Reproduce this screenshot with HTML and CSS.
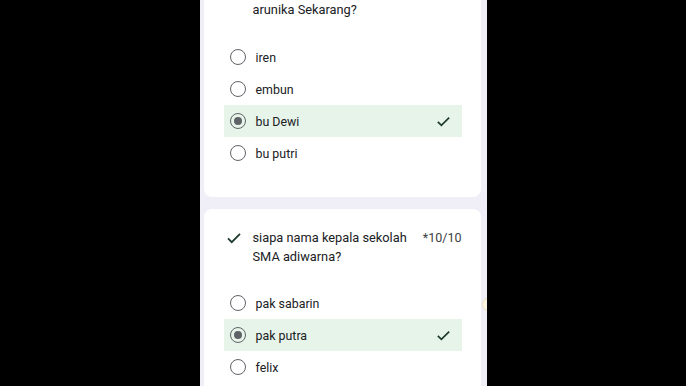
FILE: index.html
```html
<!DOCTYPE html>
<html lang="en">
<head>
    <meta charset="UTF-8">
    <meta name="viewport" content="width=device-width, initial-scale=1.0">
    <title>Kuis</title>
    <link rel="stylesheet" href="styles.css">
</head>
<body>
    <div class="page">
        <div class="card card-first">
            <div class="question">
                <span class="question-mark"></span>
                <p class="question-text">arunika Sekarang?</p>
            </div>
            <div class="options">
                <div class="option">
                    <span class="radio"></span>
                    <span class="label">iren</span>
                </div>
                <div class="option">
                    <span class="radio"></span>
                    <span class="label">embun</span>
                </div>
                <div class="option correct">
                    <span class="radio checked"></span>
                    <span class="label">bu Dewi</span>
                    <svg class="tick" viewBox="0 0 24 24"><path d="M4 12.5l5 5L20 6.5"/></svg>
                </div>
                <div class="option">
                    <span class="radio"></span>
                    <span class="label">bu putri</span>
                </div>
            </div>
        </div>

        <div class="card">
            <div class="question">
                <span class="question-mark">
                    <svg class="tick" viewBox="0 0 24 24"><path d="M4 12.5l5 5L20 6.5"/></svg>
                </span>
                <p class="question-text">siapa nama kepala sekolah SMA adiwarna?</p>
                <span class="points">*10/10</span>
            </div>
            <div class="options">
                <div class="option">
                    <span class="radio"></span>
                    <span class="label">pak sabarin</span>
                </div>
                <div class="option correct">
                    <span class="radio checked"></span>
                    <span class="label">pak putra</span>
                    <svg class="tick" viewBox="0 0 24 24"><path d="M4 12.5l5 5L20 6.5"/></svg>
                </div>
                <div class="option">
                    <span class="radio"></span>
                    <span class="label">felix</span>
                </div>
            </div>
        </div>

        <span class="edge-bubble"></span>
    </div>
</body>
</html>
```

FILE: styles.css
```css
* {
    margin: 0;
    padding: 0;
    box-sizing: border-box;
    font-family: Roboto, 'Noto Sans', Arial, sans-serif;
}

html, body {
    height: 100%;
    overflow: hidden;
}

body {
    background-color: #000;
    color: #202124;
}

.page {
    position: relative;
    overflow: hidden;
    width: 287px;
    height: 100%;
    margin: 0 auto;
    padding: 0 6px 0 4px;
    background-color: #f0eef6;
    display: flex;
    flex-direction: column;
    gap: 12px;
}

.card {
    background: #fff;
    border-radius: 8px;
    padding: 19px 19px 28px 20px;
}

.card-first {
    border-top-left-radius: 0;
    border-top-right-radius: 0;
    padding-top: 0;
}

.question {
    display: flex;
    align-items: flex-start;
    font-size: 12.8px;
    line-height: 19px;
}

.question-mark {
    width: 29px;
    flex-shrink: 0;
    display: flex;
    padding-left: 1px;
    height: 19px;
    align-items: center;
}

.question-mark .tick {
    width: 18px;
    height: 18px;
}

.question-text {
    flex: 1;
    padding-right: 8px;
}

.points {
    font-size: 12.5px;
    color: #3c4043;
}

.options {
    margin-top: 22px;
    display: flex;
    flex-direction: column;
}

.card + .card .options {
    margin-top: 21px;
}

.option {
    display: flex;
    align-items: center;
    height: 32px;
    padding: 0 10px 0 6px;
    font-size: 12.4px;
}

.option.correct {
    background-color: #e6f4ea;
}

.radio {
    width: 16px;
    height: 16px;
    border: 1.6px solid #5f6368;
    border-radius: 50%;
    flex-shrink: 0;
    display: flex;
    align-items: center;
    justify-content: center;
}

.radio.checked::after {
    content: "";
    width: 8px;
    height: 8px;
    border-radius: 50%;
    background-color: #5f6368;
}

.label {
    flex: 1;
    margin-left: 10px;
}

.tick {
    width: 17px;
    height: 17px;
    fill: none;
    stroke: #1e3a2b;
    stroke-width: 2.4;
}

.edge-bubble {
    position: absolute;
    right: -8px;
    top: 298px;
    width: 13px;
    height: 13px;
    border-radius: 50%;
    border: 1px solid #efe2b8;
    background: #fbf6e6;
}
```
